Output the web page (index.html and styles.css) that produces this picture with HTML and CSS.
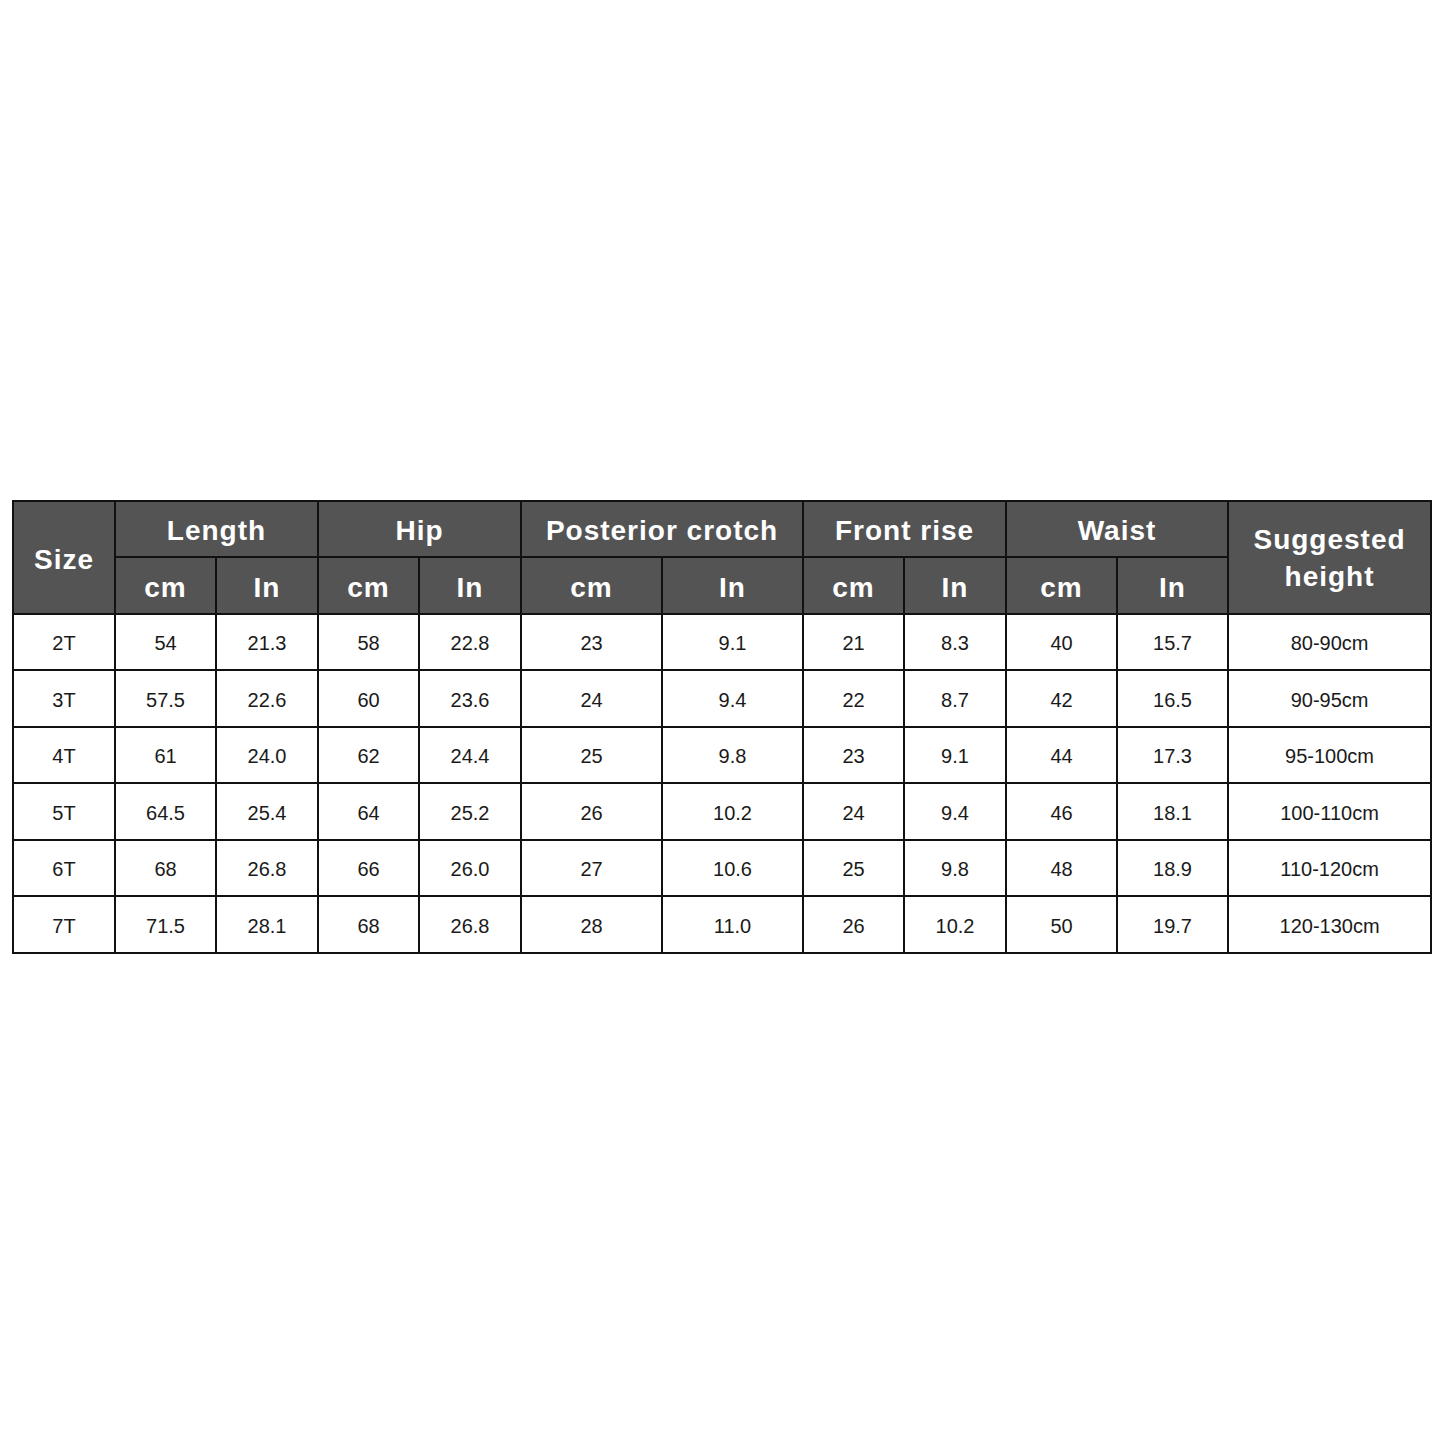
FILE: index.html
```html
<!DOCTYPE html>
<html>
<head>
<meta charset="utf-8">
<link rel="stylesheet" href="styles.css">
</head>
<body>
<table class="chart">
  <colgroup>
    <col class="c102"><col class="c101"><col class="c102"><col class="c101"><col class="c102">
    <col class="c141"><col class="c141"><col class="c101"><col class="c102">
    <col class="c111"><col class="c111"><col class="c203">
  </colgroup>
  <thead>
    <tr class="odd">
      <th rowspan="2">Size</th>
      <th colspan="2">Length</th>
      <th colspan="2">Hip</th>
      <th colspan="2">Posterior crotch</th>
      <th colspan="2">Front rise</th>
      <th colspan="2">Waist</th>
      <th rowspan="2" class="tall">Suggested<br>height</th>
    </tr>
    <tr class="even">
      <th>cm</th><th>In</th><th>cm</th><th>In</th><th>cm</th><th>In</th><th>cm</th><th>In</th><th>cm</th><th>In</th>
    </tr>
  </thead>
  <tbody>
    <tr class="odd"><td>2T</td><td>54</td><td>21.3</td><td>58</td><td>22.8</td><td>23</td><td>9.1</td><td>21</td><td>8.3</td><td>40</td><td>15.7</td><td>80-90cm</td></tr>
    <tr class="even"><td>3T</td><td>57.5</td><td>22.6</td><td>60</td><td>23.6</td><td>24</td><td>9.4</td><td>22</td><td>8.7</td><td>42</td><td>16.5</td><td>90-95cm</td></tr>
    <tr class="odd"><td>4T</td><td>61</td><td>24.0</td><td>62</td><td>24.4</td><td>25</td><td>9.8</td><td>23</td><td>9.1</td><td>44</td><td>17.3</td><td>95-100cm</td></tr>
    <tr class="even"><td>5T</td><td>64.5</td><td>25.4</td><td>64</td><td>25.2</td><td>26</td><td>10.2</td><td>24</td><td>9.4</td><td>46</td><td>18.1</td><td>100-110cm</td></tr>
    <tr class="odd"><td>6T</td><td>68</td><td>26.8</td><td>66</td><td>26.0</td><td>27</td><td>10.6</td><td>25</td><td>9.8</td><td>48</td><td>18.9</td><td>110-120cm</td></tr>
    <tr class="even"><td>7T</td><td>71.5</td><td>28.1</td><td>68</td><td>26.8</td><td>28</td><td>11.0</td><td>26</td><td>10.2</td><td>50</td><td>19.7</td><td>120-130cm</td></tr>
  </tbody>
</table>
</body>
</html>
```

FILE: styles.css
```css
html, body {
  margin: 0;
  padding: 0;
  background: #ffffff;
}
body {
  padding-top: 500px;
  padding-left: 12px;
  font-family: "Liberation Sans", Arial, sans-serif;
}
.chart {
  border-collapse: collapse;
  table-layout: fixed;
  width: 1420px;
}
.c101 { width: 101px; }
.c102 { width: 102px; }
.c111 { width: 111px; }
.c141 { width: 141px; }
.c203 { width: 203px; }
.chart tr.odd { height: 56px; }
.chart tr.even { height: 57px; }
.chart th, .chart td {
  border: 2px solid #111111;
  text-align: center;
  vertical-align: middle;
  padding: 0;
  overflow: hidden;
  white-space: nowrap;
}
.chart th {
  background: #545454;
  color: #ffffff;
  font-weight: bold;
  font-size: 28px;
  letter-spacing: 1px;
  line-height: 32px;
  padding-top: 4px;
}
.chart th.tall {
  line-height: 37px;
  padding-top: 0;
}
.chart td {
  color: #1a1a1a;
  font-size: 20px;
  line-height: 24px;
  padding-top: 2px;
}
```
